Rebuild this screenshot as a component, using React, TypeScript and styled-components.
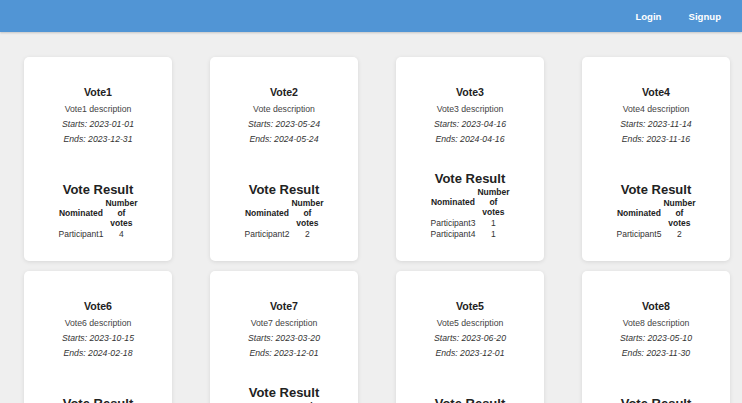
import React from "react";
import styled, { createGlobalStyle } from "styled-components";

const GlobalStyle = createGlobalStyle`
  html { scrollbar-width: none; }
  html::-webkit-scrollbar { display: none; }
  body {
    margin: 0;
    background: #efefef;
    font-family: "Liberation Sans", Arial, sans-serif;
    color: #222;
  }
`;

const Header = styled.header`
  height: 32px;
  background: #5195d5;
  box-shadow: 0 1px 2px rgba(0, 0, 0, 0.18);
  display: flex;
  justify-content: flex-end;
  align-items: center;
  gap: 27px;
  padding-right: 21px;
  position: relative;
  z-index: 1;
`;

const NavLink = styled.a`
  color: #fff;
  font-weight: 700;
  font-size: 9.6px;
  text-decoration: none;
  cursor: pointer;
`;

const Grid = styled.main`
  display: grid;
  grid-template-columns: repeat(4, 148px);
  column-gap: 38px;
  row-gap: 10px;
  padding: 25px 0 0 24px;
`;

const Card = styled.section`
  height: 204px;
  box-sizing: border-box;
  background: #fff;
  border-radius: 5px;
  box-shadow: 0 1px 4px rgba(0, 0, 0, 0.1);
  display: flex;
  flex-direction: column;
  justify-content: space-between;
  align-items: center;
  padding: 29px 6px 22px;
  text-align: center;
`;

const Info = styled.div`
  display: flex;
  flex-direction: column;
  align-items: center;
  gap: 5px;
`;

const Title = styled.h3`
  margin: 0 0 1px;
  font-size: 10.6px;
  line-height: 12px;
  font-weight: 700;
  color: #222;
`;

const Line = styled.p<{ $italic?: boolean }>`
  margin: 0;
  font-size: 8.7px;
  line-height: 10px;
  color: ${(p) => (p.$italic ? "#333" : "#444")};
  font-style: ${(p) => (p.$italic ? "italic" : "normal")};
`;

const Result = styled.div`
  display: flex;
  flex-direction: column;
  align-items: center;
`;

const ResultTitle = styled.h2`
  margin: 0 0 1px;
  font-size: 13px;
  line-height: 15px;
  font-weight: 700;
  color: #222;
`;

const Table = styled.table`
  width: min-content;
  border-collapse: collapse;
  font-size: 8.5px;
  line-height: 10px;
  color: #333;
`;

const Th = styled.th`
  padding: 0 1px;
  font-weight: 700;
  color: #222;
  text-align: center;
  vertical-align: middle;
`;

const Td = styled.td`
  padding: 1px 1px 0;
  text-align: center;
`;

type Vote = {
  title: string;
  description: string;
  starts: string;
  ends: string;
  results: [string, number][];
};

const votes: Vote[] = [
  { title: "Vote1", description: "Vote1 description", starts: "2023-01-01", ends: "2023-12-31", results: [["Participant1", 4]] },
  { title: "Vote2", description: "Vote description", starts: "2023-05-24", ends: "2024-05-24", results: [["Participant2", 2]] },
  { title: "Vote3", description: "Vote3 description", starts: "2023-04-16", ends: "2024-04-16", results: [["Participant3", 1], ["Participant4", 1]] },
  { title: "Vote4", description: "Vote4 description", starts: "2023-11-14", ends: "2023-11-16", results: [["Participant5", 2]] },
  { title: "Vote6", description: "Vote6 description", starts: "2023-10-15", ends: "2024-02-18", results: [["Participant8", 3]] },
  { title: "Vote7", description: "Vote7 description", starts: "2023-03-20", ends: "2023-12-01", results: [["Participant6", 1], ["Participant7", 2]] },
  { title: "Vote5", description: "Vote5 description", starts: "2023-06-20", ends: "2023-12-01", results: [["Participant9", 1]] },
  { title: "Vote8", description: "Vote8 description", starts: "2023-05-10", ends: "2023-11-30", results: [["Participant10", 2]] },
];

export default function App() {
  return (
    <>
      <GlobalStyle />
      <Header>
        <NavLink>Login</NavLink>
        <NavLink>Signup</NavLink>
      </Header>
      <Grid>
        {votes.map((v) => (
          <Card key={v.title}>
            <Info>
              <Title>{v.title}</Title>
              <Line>{v.description}</Line>
              <Line $italic>Starts: {v.starts}</Line>
              <Line $italic>Ends: {v.ends}</Line>
            </Info>
            <Result>
              <ResultTitle>Vote Result</ResultTitle>
              <Table>
                <thead>
                  <tr>
                    <Th>Nominated</Th>
                    <Th>Number of votes</Th>
                  </tr>
                </thead>
                <tbody>
                  {v.results.map(([name, count]) => (
                    <tr key={name}>
                      <Td>{name}</Td>
                      <Td>{count}</Td>
                    </tr>
                  ))}
                </tbody>
              </Table>
            </Result>
          </Card>
        ))}
      </Grid>
    </>
  );
}
